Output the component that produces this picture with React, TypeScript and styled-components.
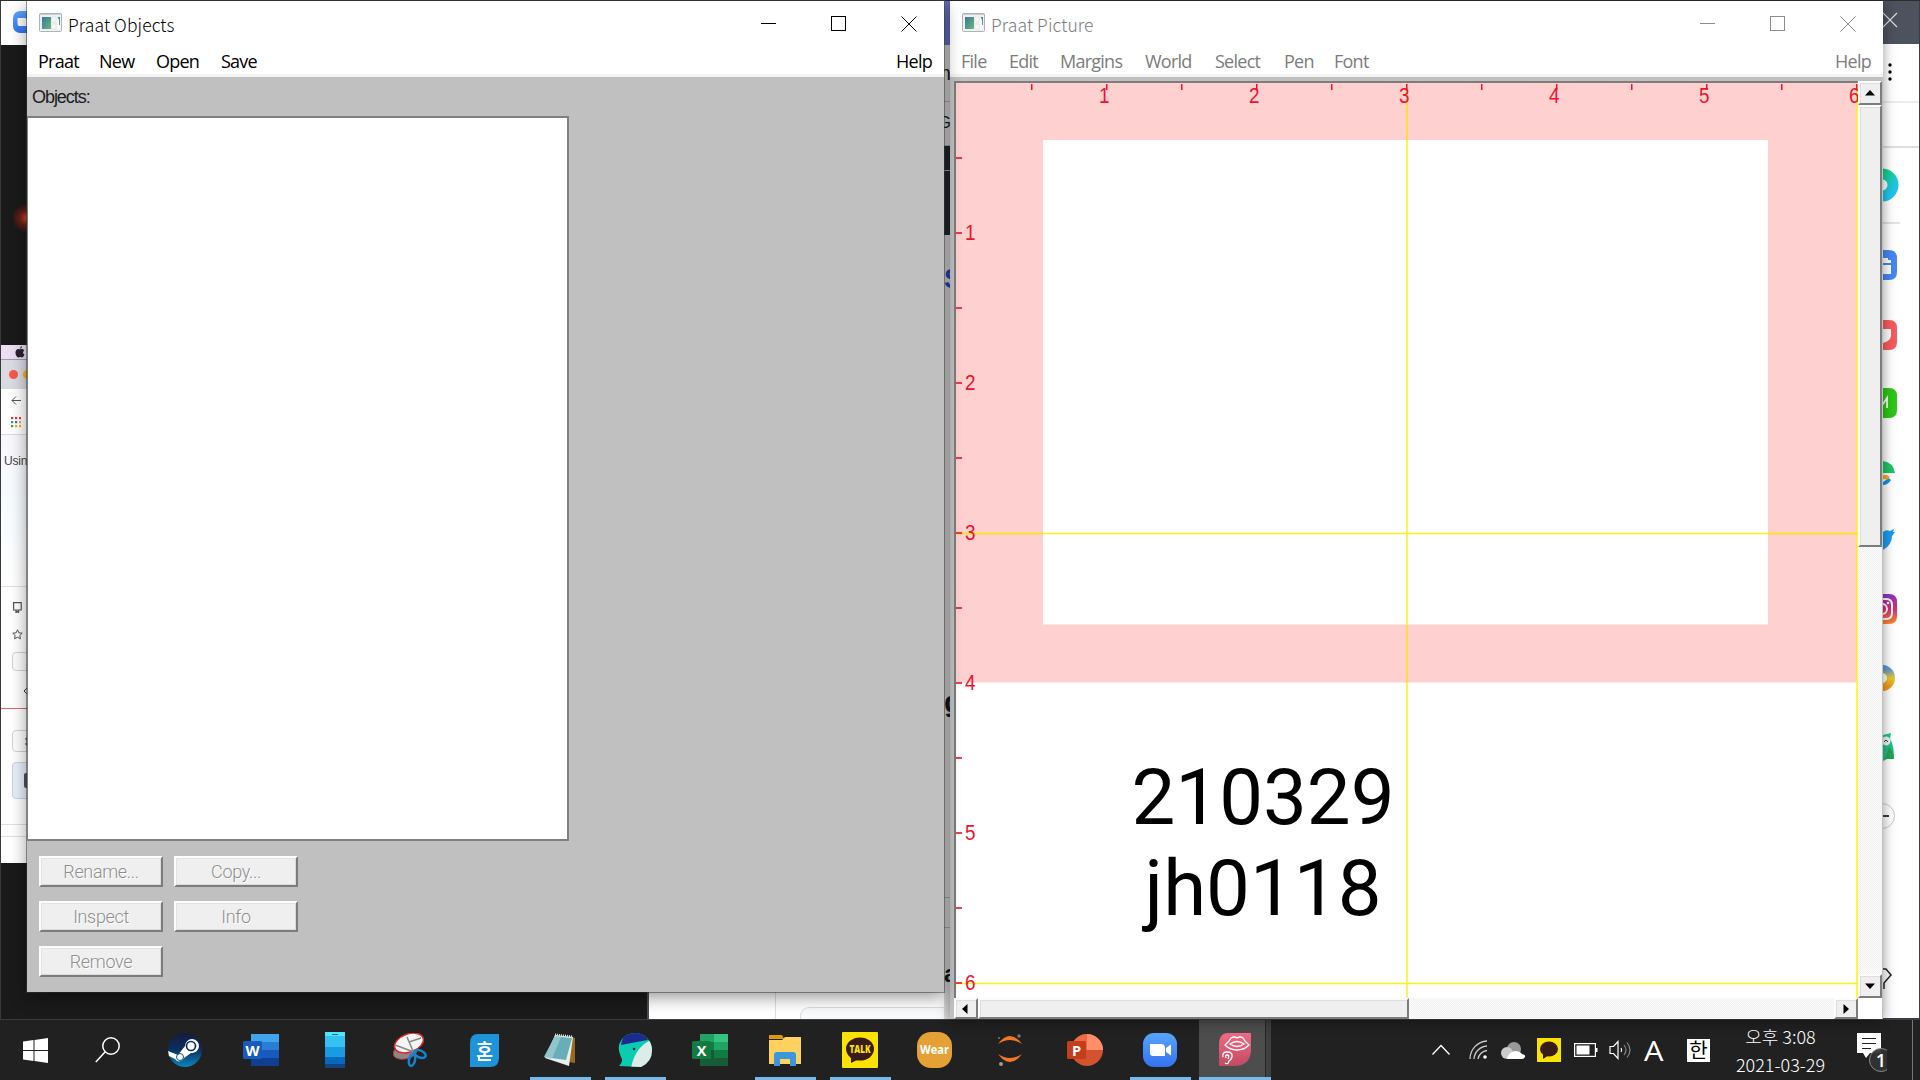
import React from "react";
import styled, { createGlobalStyle, css } from "styled-components";

const Global = createGlobalStyle`
  * { box-sizing: border-box; }
  body { margin: 0; overflow: hidden; background: #1a1a1a; }
  svg { display: block; flex: none; }
`;

const ui = `"Open Sans", "Noto Sans", "Noto Sans CJK KR", sans-serif`;

const Screen = styled.div`
  width: 1920px;
  height: 1080px;
  display: flex;
  flex-direction: column;
  overflow: hidden;
  position: relative;
  font-family: ${ui};
`;
const Desktop = styled.div`
  height: 1020px;
  display: flex;
  background: #1a1a1a;
  border-top: 1px solid #2d2d30;
`;

/* ---------- background windows ---------- */
const LeftApps = styled.div`
  width: 649px;
  height: 1019px;
  border-left: 1px solid #3a3a3a;
  border-right: 2px solid #4a4e54;
  border-bottom: 1px solid #3b3b3b;
  display: flex;
  flex-direction: column;
`;
const ZoomBar = styled.div`
  height: 44px;
  background: #fff;
  padding: 10px 0 0 12px;
`;
const Dark = styled.div`
  height: 300px;
  background: radial-gradient(circle at 26px 173px, #e0442c 0, #6b1f17 7px, #1a1a1a 15px);
`;
const Mac = styled.div`
  height: 518px;
  width: 30px;
  display: flex;
  flex-direction: column;
  background: linear-gradient(#fff 0 50px, #f8f7fc 90px, #f7fcff 160px, #fff 230px);
  overflow: hidden;
`;
const MacRow = styled.div<{ $h: number; $bg?: string; $line?: string; $pl?: number }>`
  height: ${(p) => p.$h}px;
  flex: none;
  display: flex;
  align-items: center;
  gap: 5px;
  padding-left: ${(p) => p.$pl ?? 10}px;
  background: ${(p) => p.$bg ?? "transparent"};
  border-bottom: ${(p) => (p.$line ? `1px solid ${p.$line}` : "none")};
  font: 12px "Liberation Sans", Arial, sans-serif;
  letter-spacing: -0.2px;
  color: #444;
`;
const Dot = styled.i<{ $c: string }>`
  width: 9px;
  height: 9px;
  flex: none;
  border-radius: 50%;
  background: ${(p) => p.$c};
`;
const Field = styled.div<{ $h: number; $bg?: string }>`
  width: 60px;
  height: ${(p) => p.$h}px;
  flex: none;
  display: flex;
  align-items: center;
  padding-left: 11px;
  border: 1px solid #cfd2d8;
  border-radius: 4px;
  background: ${(p) => p.$bg ?? "#fdfdfd"};
`;
const Browser = styled.div`
  flex: 1;
  display: flex;
  background: #fff;
  border-bottom: 1px solid #3b3f45;
`;
const BrowserSide = styled.div`
  width: 127px;
  border-right: 1px solid #ddd;
`;
const BrowserMain = styled.div`
  width: 168px;
  display: flex;
  flex-direction: column;
  justify-content: flex-end;
  padding-left: 24px;
`;
const Card = styled.div`
  height: 12px;
  border: 1px solid #d8dbe0;
  border-width: 1px 0 0 1px;
  border-radius: 9px 0 0 0;
  background: #f8f9fb;
`;
const Gap = styled.div`
  width: 7px;
  display: flex;
  flex-direction: column;
  background: #d8d8d8;
`;
const Piece = styled.div<{ $h: number; $bg?: string; $line?: boolean; $c?: string; $s?: number; $right?: boolean }>`
  height: ${(p) => p.$h}px;
  flex: none;
  overflow: hidden;
  display: flex;
  align-items: flex-end;
  justify-content: ${(p) => (p.$right ? "flex-start" : "flex-end")};
  line-height: 1;
  font-family: "Liberation Sans", Arial, sans-serif;
  font-weight: ${(p) => (p.$right ? 700 : 400)};
  font-size: ${(p) => p.$s ?? 16}px;
  color: ${(p) => p.$c ?? "#101a23"};
  background: ${(p) => p.$bg ?? "transparent"};
  border-bottom: ${(p) => (p.$line ? "1px solid #aaa" : "none")};
`;
const Under = styled.div`
  flex: 1;
`;
const RightApp = styled.div`
  width: 37px;
  background: #fff;
  border-right: 1px solid #3a3f45;
  border-bottom: 1px solid #3a3f45;
  display: flex;
  flex-direction: column;
`;
const Slot = styled.div<{ $h: number; $bg?: string; $line?: string; $w?: number }>`
  height: ${(p) => p.$h}px;
  width: ${(p) => (p.$w ? `${p.$w}px` : "auto")};
  flex: none;
  display: flex;
  align-items: center;
  background: ${(p) => p.$bg ?? "transparent"};
  border-bottom: ${(p) => (p.$line ? `2px solid ${p.$line}` : "none")};
`;

/* ---------- foreground windows ---------- */
const Window = styled.div<{ $x: number; $w: number; $h: number; $idle?: boolean }>`
  position: absolute;
  top: 1px;
  left: ${(p) => p.$x}px;
  width: ${(p) => p.$w}px;
  height: ${(p) => p.$h}px;
  display: flex;
  flex-direction: column;
  background: #c0c0c0;
  box-shadow: ${(p) => (p.$idle ? "0 2px 12px rgba(0,0,0,.42)" : "0 5px 16px rgba(0,0,0,.42), 0 0 0 1px rgba(70,70,70,.5)")};
  color: ${(p) => (p.$idle ? "#7c7c7c" : "#000")};
`;
const TitleBar = styled.div`
  height: 46px;
  flex: none;
  display: flex;
  background: #fff;
  padding-left: 12px;
`;
const TitleIcon = styled.div`
  padding-top: 12px;
  width: 29px;
`;
const Title = styled.div`
  padding-top: 11px;
  font: 300 17.5px/26px "Noto Sans CJK KR", ${ui};
  letter-spacing: 0.1px;
  flex: 1;
`;
const Controls = styled.div<{ $r: number }>`
  display: flex;
  gap: 54px;
  padding: 15px ${(p) => p.$r}px 0 0;
`;
const MenuBar = styled.div<{ $pl: number; $pr: number }>`
  height: 30px;
  flex: none;
  display: flex;
  background: #fff;
  border-bottom: 3px solid #f4f4f4;
  padding: 1px ${(p) => p.$pr}px 0 ${(p) => p.$pl}px;
  font-size: 18px;
  line-height: 27px;
  letter-spacing: -0.75px;
`;
const Menu = styled.div<{ $w?: number }>`
  width: ${(p) => (p.$w ? `${p.$w}px` : "auto")};
  &:last-child { margin-left: auto; }
`;
const Label = styled.div`
  height: 39px;
  padding: 9px 0 0 5px;
  font: 18px/22px "Liberation Sans", Arial, sans-serif;
  letter-spacing: -1.05px;
  color: #1c1c1c;
`;
const List = styled.div`
  width: 542px;
  height: 725px;
  background: #fff;
  border: 2px solid #808080;
  border-left-width: 1px;
`;
const Buttons = styled.div`
  display: grid;
  grid-template-columns: 124px 124px;
  grid-auto-rows: 31px;
  gap: 14px 11px;
  padding: 15px 0 0 12px;
`;
const Button = styled.button`
  border: 2px solid;
  border-color: #fcfcfc #7c7c7c #7c7c7c #fcfcfc;
  background: #efefef;
  box-shadow: inset 1px 1px #e2e2e2, inset -1px -1px #dadada;
  padding: 0;
  font: 300 18px/24px Roboto, "Liberation Sans", sans-serif;
  letter-spacing: -0.35px;
  color: #8e8e8e;
  text-shadow: 1px 1px #fff;
`;

/* ---------- picture canvas ---------- */
const PicBody = styled.div`
  flex: 1;
  display: grid;
  grid-template-columns: 904px 24px;
  grid-template-rows: 917px 21px;
  padding: 4px 0 0 4px;
`;
const Canvas = styled.div`
  position: relative;
  overflow: hidden;
  background: #fff;
  border: 2px solid #7d7d7d;
  border-right: 0;
  border-bottom: 0;
`;
const Note = styled.div`
  position: absolute;
  left: 157px;
  top: 669px;
  width: 300px;
  text-align: center;
  white-space: pre;
  font: 400 78px/91px Roboto, sans-serif;
  color: #000;
`;
const bevel = css`
  border: 2px solid;
  border-color: #fcfcfc #7c7c7c #7c7c7c #fcfcfc;
  box-shadow: inset 1px 1px #dedede;
  background: #efefef;
`;
const Track = styled.div<{ $row?: boolean }>`
  display: flex;
  flex-direction: ${(p) => (p.$row ? "row" : "column")};
  background: repeating-conic-gradient(#f1f1f1 0 25%, #fcfcfc 0 50%) 0 0 / 2px 2px;
`;
const Arrow = styled.div<{ $row?: boolean }>`
  ${bevel}
  width: ${(p) => (p.$row ? "24px" : "100%")};
  height: ${(p) => (p.$row ? "100%" : "24px")};
  display: flex;
  align-items: center;
  justify-content: center;
  padding-right: ${(p) => (p.$row ? 3 : 0)}px;
  &:last-child {
    ${(p) => (p.$row ? "margin-left" : "margin-top")}: auto;
    padding-right: 0;
  }
`;
const Thumb = styled.div<{ $size: number; $row?: boolean }>`
  ${bevel}
  ${(p) => (p.$row ? `width: ${p.$size}px; height: 100%;` : `height: ${p.$size}px;`)}
`;
const Corner = styled.div`
  background: #fff;
`;

/* ---------- taskbar ---------- */
const Taskbar = styled.div`
  height: 60px;
  display: flex;
  background: #212121;
  color: #fff;
`;
const Task = styled.div<{ $w?: number; $on?: boolean; $active?: boolean }>`
  width: ${(p) => p.$w ?? 75}px;
  height: 60px;
  display: flex;
  align-items: center;
  justify-content: center;
  position: relative;
  ${(p) => p.$active && css`
    background: linear-gradient(90deg, transparent 2px, #4d4d4d 2px 68px, #262626 68px 69px, #3f3f3f 69px 74px, transparent 74px);
  `}
  ${(p) => p.$on && css`
    &::after {
      content: "";
      position: absolute;
      bottom: 0;
      left: ${p.$active ? 2 : 8}px;
      width: ${p.$active ? 72 : 61}px;
      height: 3px;
      background: #76b9ed;
    }
  `}
`;
const Tray = styled.div`
  margin-left: auto;
  width: 488px;
  display: flex;
  align-items: center;
`;
const TrayItem = styled.div<{ $w: number }>`
  width: ${(p) => p.$w}px;
  display: flex;
  align-items: center;
`;
const Ime = styled.div`
  width: 23px;
  height: 23px;
  background: #fff;
  color: #000;
  font: 20px/22px "Noto Sans CJK KR", sans-serif;
  text-align: center;
`;
const Latin = styled.div`
  font: 400 28px/28px "Open Sans", sans-serif;
  transform: scaleX(1.1);
  transform-origin: left;
`;
const Clock = styled.div`
  width: 107px;
  margin-right: 3px;
  text-align: center;
  font: 300 18px/28px "Noto Sans CJK KR", sans-serif;
  padding-bottom: 1px;
`;
const ShowDesk = styled.div`
  width: 8px;
  height: 60px;
  border-left: 1px solid #777;
  margin-left: auto;
`;

const AppIcon = () => (
  <svg width="23" height="19" viewBox="0 0 23 19">
    <defs><linearGradient id="ai" x1="0" y1="0" x2="1" y2="1"><stop offset="0" stopColor="#3f76a0" /><stop offset="1" stopColor="#64b878" /></linearGradient></defs>
    <rect x=".5" y=".5" width="22" height="18" rx="1" fill="#eef0f2" stroke="#adb3bb" />
    <path d="M1 1.5h21" stroke="#c6ccd3" />
    <rect x="3" y="4" width="9" height="12" fill="url(#ai)" />
    <path d="M13 4h4v5h-4zM13 11h4v5h-4z" fill="#f9f6f3" stroke="#dfe3e4" strokeWidth=".6" />
    <rect x="18" y="4" width="3" height="12" fill="#fff" />
    <path d="M20 4h1v8h-1z" fill="url(#ai)" /><path d="M18.500 4h2v4z" fill="#4c8fa5" />
  </svg>
);
const WinControls = ({ color, right }: { color: string; right: number }) => (
  <Controls $r={right}>
    <svg width="16" height="16" stroke={color}><path d="M0 7.500h15" /></svg>
    <svg width="16" height="16" stroke={color} fill="none"><rect x=".5" y=".5" width="14" height="14" /></svg>
    <svg width="16" height="16" stroke={color}><path d="M.5.5l15 15M15.500.5l-15 15" /></svg>
  </Controls>
);
const Tri = ({ d }: { d: string }) => <svg width="12" height="12"><path d={d} fill="#000" /></svg>;

const Ruler = () => {
  const halves = Array.from({ length: 12 }, (_, i) => i + 1);
  const red = "#e8142c";
  return (
    <svg width="904" height="915" fontFamily="Liberation Sans, Arial, sans-serif" fontSize="22" fill={red}>
      <path fillRule="evenodd" fill="#ffd0d0" d="M0 0H901V599.500H0zM87 57V541.500H812V57z" />
      <path d="M451 4V915M901 4V915M0 450.500H904M0 900.500H904" stroke="#ffee1c" strokeWidth="1.500" />
      <path d="M451 4V57M451 542V599M0 450.500H87M812 450.500H901" stroke="#ffdd22" strokeWidth="1.500" />
      {halves.map((n) => (
        <g key={n}>
          <rect x={n * 75} y="1" width="1.500" height="6" />
          <rect x="0" y={n * 75 - 0.8} width="6" height="1.600" />
        </g>
      ))}
      {[1, 2, 3, 4, 5, 6].map((n) => (
        <g key={n}>
          <text x={n * 150 - 7} y="20" textLength="10.500" lengthAdjust="spacingAndGlyphs">{n}</text>
          <text x="9" y={n * 150 + 6.5} textLength="10.500" lengthAdjust="spacingAndGlyphs">{n}</text>
        </g>
      ))}
    </svg>
  );
};

const Office = ({ letter, kind }: { letter: string; kind: "w" | "x" | "p" }) => {
  const c = { w: ["#41a5ee", "#2b7cd3", "#185abd", "#103f91"], x: ["#33c481", "#21a366", "#107c41", "#185c37"], p: ["#ff8f6b", "#ff8f6b", "#d35230", "#d35230"] }[kind];
  const tab = { w: "#185abd", x: "#107c41", p: "#c43e1c" }[kind];
  return (
    <svg width="36" height="34" viewBox="0 0 36 34">
      {kind === "p" ? (
        <><circle cx="20" cy="17" r="16" fill={c[3]} /><path d="M20 1a16 16 0 0 1 16 16H20z" fill={c[0]} /><path d="M20 1v16H4A16 16 0 0 1 20 1z" fill="#ed6c47" /></>
      ) : (
        <>
          {c.map((f, i) => <rect key={f} x="8" y={1 + i * 8} width="28" height="8" fill={f} />)}
          {kind === "x" && <><path d="M8 1h14v8H8z" fill="#21a366" /><path d="M8 9h14v8H8z" fill="#107c41" /><path d="M8 17h14v8H8z" fill="#185c37" /></>}
        </>
      )}
      <rect x="0" y="8" width="19" height="18" rx="1.500" fill={tab} />
      <text x="9.500" y="22.500" textAnchor="middle" fontFamily="Open Sans, sans-serif" fontWeight="700" fontSize="14.500" fill="#fff">{letter}</text>
    </svg>
  );
};
const ZoomLogo = ({ s = 34 }: { s?: number }) => (
  <svg width={s} height={s} viewBox="0 0 34 34">
    <defs><linearGradient id="zg" x2="0" y2="1"><stop stopColor="#59a3ff" /><stop offset="1" stopColor="#3473f0" /></linearGradient></defs>
    <rect width="34" height="34" rx="11" fill="url(#zg)" />
    <path d="M7 11h11q4 0 4 4v8H10q-3 0-3-3zM23 15l5-3.500v11L23 19z" fill="#fff" />
  </svg>
);

const App = () => (
  <>
    <Global />
    <Screen>
      <Desktop>
        <LeftApps>
          <ZoomBar><ZoomLogo s={22} /></ZoomBar>
          <Dark />
          <Mac>
            <MacRow $h={15} $bg="#eadff3" $line="#a894b8" $pl={14}>
              <svg width="10" height="12" viewBox="0 0 10 12" fill="#2b2233"><path d="M5 3.500C3 2.300.5 3.500.5 6.500.5 9 2 11.500 3.500 11.500c.7 0 1-.4 1.700-.4s1 .4 1.700.4C8 11.500 9 10 9.500 8.600 7.600 7.800 7.700 5.300 9.200 4.400 8 2.800 6.500 2.800 5 3.500zM5 2.800C5 1.200 6 .3 7 .2 7 1.500 6.200 2.700 5 2.800z" /></svg>
            </MacRow>
            <MacRow $h={29} $bg="#d9dbe2" $pl={8}><Dot $c="#fb5552" /><Dot $c="#f6b427" /></MacRow>
            <MacRow $h={23} $bg="#fff">
              <svg width="10" height="9" stroke="#555" fill="none"><path d="M10 4.500H1M5 .5l-4 4 4 4" /></svg>
            </MacRow>
            <MacRow $h={23} $line="#ddd8e4" $bg="#fff">
              <svg width="10" height="12">{["#e33", "#e33", "#e33", "#3a4", "#27d", "#ea2", "#3a4", "#ea2", "#ea2"].map((f, i) => <rect key={i} x={(i % 3) * 4} y={Math.floor(i / 3) * 4} width="2.200" height="2.200" fill={f} />)}</svg>
            </MacRow>
            <MacRow $h={52} $pl={3}>Using</MacRow>
            <MacRow $h={100} $line="#e4dfe2" />
            <MacRow $h={40} $pl={12}>
              <svg width="9" height="11" fill="none" stroke="#555" strokeWidth="1.200"><path d="M.6 8V.6h7.600V8zM3 8v2.500l1.300-1 1.300 1V8" /></svg>
            </MacRow>
            <MacRow $h={14} $pl={11}>
              <svg width="11" height="11" fill="none" stroke="#555" viewBox="0 0 11 11"><path d="M5.500.8l1.400 3 3.300.4-2.400 2.300.6 3.300-2.900-1.600-2.900 1.600.6-3.300L.8 4.200l3.300-.4z" /></svg>
            </MacRow>
            <MacRow $h={41} $pl={11}><Field $h={19} /></MacRow>
            <MacRow $h={18} $pl={22}><svg width="6" height="8" fill="none" stroke="#333"><path d="M5 0L1 4l4 4" /></svg></MacRow>
            <MacRow $h={9} $line="#d66a70" />
            <MacRow $h={64} $pl={11}>
              <Field $h={22}><svg width="6" height="9" fill="none" stroke="#444"><path d="M3 0v9M1 2h4M1 7h4" /></svg></Field>
            </MacRow>
            <MacRow $h={15} $pl={11}>
              <Field $h={37} $bg="#e6f0fb"><svg width="6" height="15"><rect width="6" height="15" rx="2" fill="#554d58" /></svg></Field>
            </MacRow>
            <MacRow $h={37} $line="#dcdfe8" />
            <MacRow $h={12} $line="#dcdfe8" />
          </Mac>
        </LeftApps>
        <Browser>
          <BrowserSide />
          <BrowserMain><Card /></BrowserMain>
          <Gap>
            <Piece $h={44} $bg="#6672c0" />
            <Piece $h={38} $s={20}>m</Piece>
            <Piece $h={19} $line />
            <Piece $h={29} $s={16}>G</Piece>
            <Piece $h={15} $line />
            <Piece $h={25} $bg="#22262c" $line />
            <Piece $h={64} $bg="#22262c" />
            <Piece $h={58} $s={27} $c="#2145c0" $right>S</Piece>
            <Piece $h={424} $s={30} $right>g</Piece>
            <Piece $h={181} $line />
            <Piece $h={30} $line />
            <Piece $h={58} $s={24} $right>a</Piece>
          </Gap>
          <Under />
          <RightApp>
            <Slot $h={43} $bg="#4c525e">
              <svg width="16" height="30" stroke="#ddd" strokeWidth="1.200"><path d="M0 5l14 14M14 5L0 19" /></svg>
            </Slot>
            <Slot $h={56}><svg width="12" height="20"><circle cx="7" cy="3" r="1.700" /><circle cx="7" cy="10" r="1.700" /><circle cx="7" cy="17" r="1.700" /></svg></Slot>
            <Slot $h={3} $line="#eaecef" />
            <Slot $h={45} $line="#dcdfe4" />
            <Slot $h={76} $w={17} $line="#e3e3e3">
              <svg width="17" height="34"><defs><linearGradient id="r1" x2=".7" y2="1"><stop offset=".2" stopColor="#12d38a" /><stop offset="1" stopColor="#20c4f0" /></linearGradient></defs><circle cx="-1" cy="17" r="11" fill="none" stroke="url(#r1)" strokeWidth="11" /></svg>
            </Slot>
            <Slot $h={82}>
              <svg width="15" height="30"><path d="M0 0h6q8 0 8 8v14q0 8-8 8H0z" fill="#4587f4" /><path d="M0 8h5v2h3v3H0zM0 15h8v9H0z" fill="#fff" /></svg>
            </Slot>
            <Slot $h={57}>
              <svg width="15" height="30"><path d="M0 0h6q8 0 8 8v14q0 8-8 8H0z" fill="#f95b5c" /><path d="M0 9h8v6q0 6-8 8z" fill="#fff" /></svg>
            </Slot>
            <Slot $h={80}>
              <svg width="15" height="30"><path d="M0 0h6q8 0 8 8v14q0 8-8 8H0z" fill="#2dc816" /><path d="M-4 20V10l4 6 4-6v10" stroke="#fff" strokeWidth="1.800" fill="none" /></svg>
            </Slot>
            <Slot $h={59}>
              <svg width="13" height="26"><path d="M0 1q10 1 12 12H0z" fill="#1bc765" /><path d="M0 15h4l-4 5z" fill="#f9ac16" /><path d="M4 17l4 3q-3 5-8 5v-3q3-1 4-5z" fill="#1494ec" /><path d="M0 15h4l3 2-3 3-4-2z" fill="#f9ac16" /></svg>
            </Slot>
            <Slot $h={75}>
              <svg width="13" height="22"><path d="M0 3Q3 0 7 2l4-2-1 3h2l-3 4Q9 16 0 21z" fill="#1d9bf0" /></svg>
            </Slot>
            <Slot $h={64}>
              <svg width="15" height="30"><defs><linearGradient id="ig" x2="0" y2="1"><stop stopColor="#8238c8" /><stop offset=".5" stopColor="#e0286f" /><stop offset="1" stopColor="#fb8c2a" /></linearGradient></defs><path d="M0 0h6q8 0 8 8v14q0 8-8 8H0z" fill="url(#ig)" /><path d="M0 5h3q6 0 6 6v8q0 6-6 6H0" fill="none" stroke="#fff" strokeWidth="2" /><circle cx="-1" cy="15" r="5" fill="none" stroke="#fff" strokeWidth="2" /><circle cx="5" cy="9" r="1.300" fill="#fff" /></svg>
            </Slot>
            <Slot $h={74}>
              <svg width="13" height="28"><defs><linearGradient id="r2" x2="0" y2="1"><stop stopColor="#5b9bd8" /><stop offset=".5" stopColor="#e9c62d" /><stop offset="1" stopColor="#f19a1b" /></linearGradient></defs><circle cx="-1" cy="14" r="9" fill="none" stroke="url(#r2)" strokeWidth="8" /></svg>
            </Slot>
            <Slot $h={64}>
              <svg width="13" height="28"><path d="M0 2L8 0 7 6q4 5 4 20l-5-1-6 3z" fill="#25c08c" /><circle cx="3" cy="8" r="4.500" fill="#eef7f4" /><path d="M1 9l2-2 2 2" stroke="#333" fill="none" /><path d="M6 14q5 4 5 12H2z" fill="#22a659" /></svg>
            </Slot>
            <Slot $h={73}>
              <svg width="13" height="28"><circle cx="-1" cy="14" r="12.500" fill="#fff" stroke="#ccc" /><path d="M0 14h6" stroke="#333f4c" strokeWidth="2" /></svg>
            </Slot>
            <Slot $h={254}>
              <svg width="10" height="22" stroke="#222" fill="none" strokeWidth="1.500"><path d="M0 1h3l5 6-7 8v6" /></svg>
            </Slot>
          </RightApp>
        </Browser>
      </Desktop>

      <Taskbar>
        <Task $w={71}><svg width="25" height="25" fill="#fff"><path d="M0 3.500L10.500 2v10H0zM11.500 1.900L25 0v12H11.500zM0 13h10.500v10L0 21.500zM11.500 13H25v12l-13.500-1.900z" /></svg></Task>
        <Task $w={74}><svg width="26" height="26" fill="none" stroke="#fff" strokeWidth="1.500"><circle cx="16" cy="9" r="8.200" /><path d="M10 15L.8 25" /></svg></Task>
        <Task $w={79}><svg width="34" height="34"><defs><linearGradient id="st" x2="0" y2="1"><stop stopColor="#141b3c" /><stop offset=".5" stopColor="#0b2f60" /><stop offset="1" stopColor="#0c86bd" /></linearGradient></defs><circle cx="17" cy="17" r="17" fill="url(#st)" /><path d="M0 18l10 4 7-9a7 7 0 1 1 6 7l-7 5a5 5 0 0 1-9 1L1 23z" fill="#fff" /><circle cx="23" cy="13" r="4.500" fill="#fff" stroke="#0b2f60" strokeWidth="1.700" /><circle cx="12" cy="24" r="3.500" fill="none" stroke="#0b4f80" /></svg></Task>
        <Task $w={73}><Office letter="W" kind="w" /></Task>
        <Task><svg width="20" height="36">{["#50e6ff", "#35c1f1", "#199be2", "#0669bc", "#16447f"].map((f, i) => <rect key={f} y={[0, 4, 15, 25, 32][i]} width="20" height={[4, 11, 10, 7, 4][i]} fill={f} />)}<path d="M7 2.500h6" stroke="#0669bc" /></svg></Task>
        <Task><svg width="34" height="34"><ellipse cx="12" cy="19" rx="12" ry="7" fill="#8e8585" stroke="#a94442" transform="rotate(-12 12 19)" /><ellipse cx="16" cy="10" rx="15" ry="9" fill="#f5f5f5" stroke="#e02828" strokeWidth="1.500" transform="rotate(-20 16 10)" /><path d="M14 4l6 14M2 12l19 7M16 9l12-4" stroke="#888" strokeWidth="1.500" /><g fill="none" stroke="#1683d0" strokeWidth="2.500"><ellipse cx="27" cy="21" rx="6" ry="3.500" transform="rotate(25 27 21)" /><ellipse cx="19" cy="27" rx="3" ry="6" transform="rotate(12 19 27)" /></g></svg></Task>
        <Task><svg width="29" height="33"><path d="M8 0h21v24q0 9-9 9H0V9q0-9 8-9z" fill="#1e94d8" /><text x="14.500" y="23" textAnchor="middle" fontFamily="Noto Sans CJK KR" fontWeight="700" fontSize="18" fill="#fff">호</text><path d="M9 21v5h12" stroke="#fff" strokeWidth="2.200" fill="none" /></svg></Task>
        <Task $on><svg width="34" height="34"><path d="M26 3l6 2v25l-6-1z" fill="#9a6a1c" /><path d="M12 2l18 2-4 29-24-8z" fill="#e6eeee" /><path d="M12 3l17 2-6 22L1 24z" fill="#68aeb8" /><path d="M18 4l-9 22-8-2L12 3z" fill="#a6d2d6" opacity=".65" /><path d="M12 2l18 2" stroke="#ddd" strokeWidth="3" strokeDasharray="1 1" /></svg></Task>
        <Task $on><svg width="36" height="36"><defs><clipPath id="wh"><path d="M18 1a17 17 0 0 1 17 17q0 12-11 17L2 34q5-5 2-9Q-1 15 5 7 10 1 18 1z" /></clipPath></defs><g clipPath="url(#wh)"><rect width="36" height="36" fill="#0bcbb0" /><path d="M4 13Q6-2 20 0q8 1 11 8-12 2-27 5z" fill="#1b2c8e" /><path d="M36 7Q18 14 14 36h22z" fill="#dcece9" /></g><circle cx="17" cy="17" r="1.300" fill="#123" /></svg></Task>
        <Task><Office letter="X" kind="x" /></Task>
        <Task $on><svg width="32" height="31"><path d="M0 0h13l2 4H0z" fill="#dc9a08" /><path d="M0 5h13l3-3h16v27H0z" fill="#ffd25e" /><path d="M5 31V20q0-3 3-3h16q3 0 3 3v11h-6v-7H11v7z" fill="#3a96dd" /></svg></Task>
        <Task $on><svg width="36" height="36"><rect width="36" height="36" rx="1" fill="#fbe300" /><ellipse cx="18" cy="17" rx="14" ry="11.500" fill="#391b1b" /><path d="M9 24v7l8-4z" fill="#391b1b" /><text x="18" y="21" textAnchor="middle" fontFamily="Open Sans, sans-serif" fontWeight="800" fontSize="10" textLength="21" lengthAdjust="spacingAndGlyphs" fill="#fbe300">TALK</text></svg></Task>
        <Task><svg width="35" height="36"><rect width="35" height="36" rx="14" fill="#e5a136" /><text x="17.500" y="22" textAnchor="middle" fontFamily="Open Sans, sans-serif" fontWeight="700" fontSize="12" textLength="29" lengthAdjust="spacingAndGlyphs" fill="#fff">Wear</text></svg></Task>
        <Task><svg width="26" height="34"><path d="M1 11Q13-5 25 11 13 3 1 11zM1 21q12 16 24 0-12 8-24 0z" fill="#f37726" /><circle cx="22" cy="3" r="1.700" fill="#777" /><circle cx="4" cy="31" r="2" fill="#999" /><circle cx="2" cy="5" r="1" fill="#777" /></svg></Task>
        <Task><Office letter="P" kind="p" /></Task>
        <Task $on><ZoomLogo /></Task>
        <Task $on $active><svg width="34" height="34"><defs><linearGradient id="pr" x2="0" y2="1"><stop stopColor="#f06a85" /><stop offset="1" stopColor="#c14a63" /></linearGradient></defs><path d="M10 0h23v16Q33 33 16 33H1V12Q1 0 10 0z" fill="url(#pr)" /><g fill="none" stroke="#fff" strokeWidth="1.300"><path d="M7 12q4-3 6-7 3-2 6 0 3-2 6 0 2 4 6 7-5 5-12 5T7 12zM12 11q7-5 14 0-7 5-14 0z" /><path d="M5 24q-1-5 4-5 6 0 5 5-1 3-3 4-1 4-4 2M8 25q-1-3 1-3 3 0 1 4" /></g></svg></Task>
        <Tray>
          <TrayItem $w={37}><svg width="18" height="12" fill="none" stroke="#fff" strokeWidth="1.300"><path d="M.5 10.500L9 1.500l8.500 9" /></svg></TrayItem>
          <TrayItem $w={32}><svg width="19" height="20" fill="none" stroke="#ccc" strokeWidth="1.300"><path d="M1 19A18 18 0 0 1 18 1M5 19A14 14 0 0 1 18 6M9 19A10 10 0 0 1 18 10.500" /><circle cx="16" cy="17" r="1.800" fill="#fff" stroke="none" /></svg></TrayItem>
          <TrayItem $w={36}><svg width="25" height="17"><circle cx="13" cy="7" r="7" fill="#999" /><circle cx="6" cy="11" r="6" fill="#ccc" /><path d="M6 17q1-7 8-8 5 0 7 3 4 1 3 3-1 2-3 2z" fill="#fff" /></svg></TrayItem>
          <TrayItem $w={37}><svg width="24" height="24"><rect width="24" height="24" fill="#fbe300" /><ellipse cx="12" cy="11" rx="9" ry="7.500" fill="#391b1b" /><path d="M6 15v6l6-4z" fill="#391b1b" /></svg></TrayItem>
          <TrayItem $w={35}><svg width="24" height="14" fill="none" stroke="#fff" strokeWidth="1.200"><rect x=".6" y=".6" width="20.800" height="12.800" /><rect x="2.500" y="2.500" width="13" height="9" fill="#fff" stroke="none" /><path d="M22.500 5v4" strokeWidth="2" /></svg></TrayItem>
          <TrayItem $w={35}><svg width="23" height="20" fill="none" stroke="#fff" strokeWidth="1.200"><path d="M1 6.500h3.500L9 1.500v17L4.500 13.500H1z" /><path d="M12 8q1.500 2 0 4" /><path d="M15 5q4 5 0 10M18 2.500q6 7.500 0 15" stroke="#888" /></svg></TrayItem>
          <TrayItem $w={43}><Latin>A</Latin></TrayItem>
          <TrayItem $w={40}><Ime>한</Ime></TrayItem>
          <Clock>오후 3:08<br />2021-03-29</Clock>
          <TrayItem $w={50}>
            <svg width="50" height="44" viewBox="-20 -1 50 44"><path d="M0 4h24v20H13l-4 5-3-5H0z" fill="#fff" /><path d="M5 9.500h14M5 14.500h14M5 19.500h9" stroke="#222" /><circle cx="24" cy="31" r="11.500" fill="#333" fillOpacity=".95" stroke="#888" /><text x="24" y="37.500" fill="#fff" textAnchor="middle" fontFamily="Open Sans, sans-serif" fontSize="18" fontWeight="600">1</text></svg>
          </TrayItem>
          <ShowDesk />
        </Tray>
      </Taskbar>

      <Window $x={950} $w={933} $h={1018} $idle>
        <TitleBar>
          <TitleIcon><AppIcon /></TitleIcon>
          <Title>Praat Picture</Title>
          <WinControls color="#8c8c8c" right={27} />
        </TitleBar>
        <MenuBar $pl={11} $pr={12}>
          <Menu $w={48}>File</Menu>
          <Menu $w={51}>Edit</Menu>
          <Menu $w={85}>Margins</Menu>
          <Menu $w={70}>World</Menu>
          <Menu $w={69}>Select</Menu>
          <Menu $w={50}>Pen</Menu>
          <Menu $w={50}>Font</Menu>
          <Menu>Help</Menu>
        </MenuBar>
        <PicBody>
          <Canvas>
            <Ruler />
            <Note>{"210329\njh0118"}</Note>
          </Canvas>
          <Track>
            <Arrow><Tri d="M1 8.500L6 3l5 5.500z" /></Arrow>
            <Thumb $size={442} />
            <Arrow><Tri d="M1 3.500h10L6 9z" /></Arrow>
          </Track>
          <Track $row>
            <Arrow $row><Tri d="M8.500 1v10L3 6z" /></Arrow>
            <Thumb $size={431} $row />
            <Arrow $row><Tri d="M3.500 1v10L9 6z" /></Arrow>
          </Track>
          <Corner />
        </PicBody>
      </Window>

      <Window $x={27} $w={917} $h={991}>
        <TitleBar>
          <TitleIcon><AppIcon /></TitleIcon>
          <Title>Praat Objects</Title>
          <WinControls color="#000" right={27} />
        </TitleBar>
        <MenuBar $pl={11} $pr={12}>
          <Menu $w={61}>Praat</Menu>
          <Menu $w={57}>New</Menu>
          <Menu $w={65}>Open</Menu>
          <Menu $w={60}>Save</Menu>
          <Menu>Help</Menu>
        </MenuBar>
        <Label>Objects:</Label>
        <List />
        <Buttons>
          <Button>Rename...</Button>
          <Button>Copy...</Button>
          <Button>Inspect</Button>
          <Button>Info</Button>
          <Button>Remove</Button>
        </Buttons>
      </Window>
    </Screen>
  </>
);

export default App;
